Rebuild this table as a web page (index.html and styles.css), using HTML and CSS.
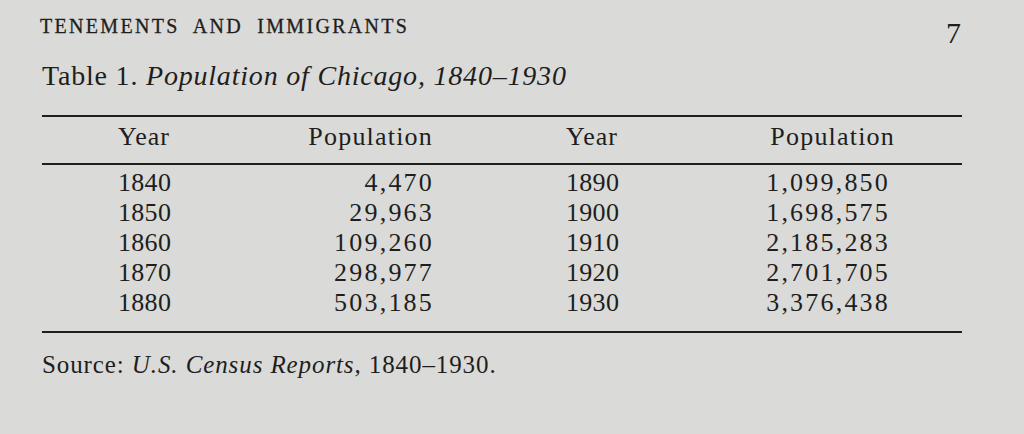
FILE: index.html
```html
<!DOCTYPE html>
<html lang="en">
<head>
<meta charset="utf-8">
<title>Tenements and Immigrants</title>
<link rel="stylesheet" href="styles.css">
</head>
<body>
<div class="page">
  <header class="running">
    <span class="running-title">Tenements and Immigrants</span>
    <span class="folio">7</span>
  </header>
  <h1 class="caption">Table 1. <em>Population of Chicago, 1840–1930</em></h1>
  <div class="table">
    <div class="row head">
      <span class="year">Year</span>
      <span class="pop pop-head">Population</span>
      <span class="year2">Year</span>
      <span class="pop2 pop2-head">Population</span>
    </div>
    <div class="body">
      <div class="row">
        <span class="year">1840</span><span class="pop">4,470</span>
        <span class="year2">1890</span><span class="pop2">1,099,850</span>
      </div>
      <div class="row">
        <span class="year">1850</span><span class="pop">29,963</span>
        <span class="year2">1900</span><span class="pop2">1,698,575</span>
      </div>
      <div class="row">
        <span class="year">1860</span><span class="pop">109,260</span>
        <span class="year2">1910</span><span class="pop2">2,185,283</span>
      </div>
      <div class="row">
        <span class="year">1870</span><span class="pop">298,977</span>
        <span class="year2">1920</span><span class="pop2">2,701,705</span>
      </div>
      <div class="row">
        <span class="year">1880</span><span class="pop">503,185</span>
        <span class="year2">1930</span><span class="pop2">3,376,438</span>
      </div>
    </div>
  </div>
  <p class="source">Source: <em>U.S. Census Reports,</em> 1840–1930.</p>
</div>
</body>
</html>
```

FILE: styles.css
```css
html, body {
  margin: 0;
  padding: 0;
  background: #dadad8;
}

body {
  font-family: "Liberation Serif", "Times New Roman", serif;
  color: #1e1e1e;
  font-variant-numeric: oldstyle-nums;
  width: 1024px;
  height: 434px;
  overflow: hidden;
}

.page {
  padding: 0 62px 0 42px;
}

.running {
  display: flex;
  justify-content: space-between;
  align-items: baseline;
  padding-top: 11px;
  height: 36px;
  line-height: 30px;
}

.running-title {
  margin-left: -2px;
  font-size: 20px;
  text-transform: uppercase;
  letter-spacing: 2.3px;
  word-spacing: 7px;
  -webkit-text-stroke: 0.3px #1e1e1e;
}

.folio {
  align-self: flex-start;
  margin-top: 7px;
  font-size: 30px;
  margin-right: 1px;
}

.caption {
  margin: 9px 0 0;
  font-weight: normal;
  font-size: 28px;
  line-height: 40px;
  letter-spacing: 0.8px;
}

.caption em {
  font-style: italic;
}

.table {
  margin-top: 19px;
  border-top: 2px solid #1e1e1e;
  border-bottom: 2px solid #1e1e1e;
  font-size: 26px;
}

.row {
  display: grid;
  grid-template-columns: 258px 132px 268px 188px 1fr;
  line-height: 30px;
  letter-spacing: 0.3px;
}

.row.head {
  padding: 5px 0 11px;
  border-bottom: 2px solid #1e1e1e;
}

.row.head .year,
.row.head .year2 {
  letter-spacing: 1px;
}

.body {
  padding: 3px 0 13px;
}

.year {
  padding-left: 76px;
}

.pop,
.pop2 {
  text-align: right;
  letter-spacing: 2.2px;
  margin-right: -2px;
}

.pop-head {
  letter-spacing: 1.2px;
  margin-right: -1px;
}

.year2 {
  padding-left: 134px;
}

.pop2-head {
  letter-spacing: 1.2px;
  margin-right: -7px;
}

.source {
  margin: 17px 0 0;
  font-size: 25px;
  line-height: 30px;
  letter-spacing: 0.9px;
}
```
